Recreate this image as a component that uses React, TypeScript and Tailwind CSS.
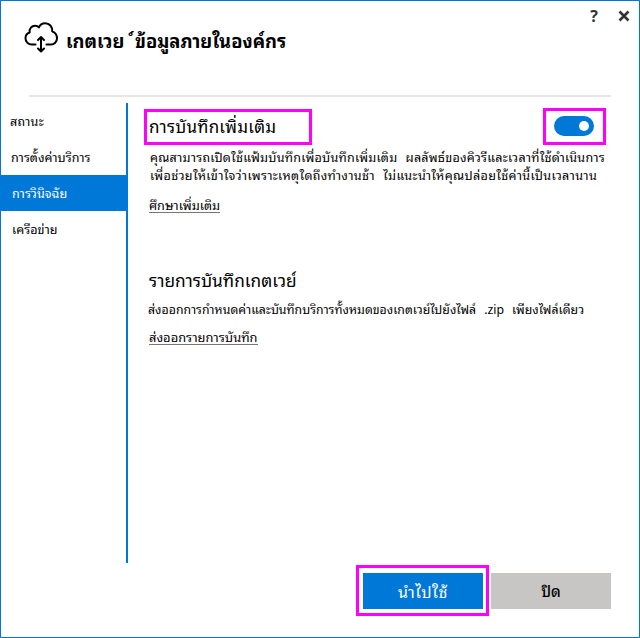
import React from "react";

const navItems = [
  { label: "สถานะ", style: "pl-[9px] tracking-[0.2px]", active: false },
  { label: "การตั้งค่าบริการ", style: "pl-[10px]", active: false },
  { label: "การวินิจฉัย", style: "pl-[11px]", active: true },
  { label: "เครือข่าย", style: "pl-[11px]", active: false },
];

function CloudIcon() {
  return (
    <svg width="36" height="34" viewBox="0 0 36 34" fill="none" stroke="#000" strokeWidth="2" strokeLinecap="round" strokeLinejoin="round" className="shrink-0">
      <path d="M11.5 23.5H8C4 23.5 1.5 20.5 1.5 17.2C1.5 14.4 3.2 12.2 5.7 11.5C5 7.5 7.7 4.8 11.1 4.8C12.7 4.8 14.1 5.4 14.9 6.5C16.1 3.3 18.5 2.2 21.1 2.2C25.5 2.2 28.5 5.6 28.2 10.4C30.9 11.5 33 13.9 33 17.2C33 20.8 30.3 23.5 26.9 23.5H22.5" />
      <path d="M17 16V30M14 19L17 16L20 19M14 27.5L17 30.5L20 27.5" />
    </svg>
  );
}

export default function App() {
  return (
    <div className="flex h-[638px] w-[640px] flex-col overflow-hidden border border-[#0078d7] bg-white font-['Noto_Sans_Thai_Looped','Loma','Noto_Sans','Open_Sans',sans-serif] text-black">
      <header className="flex h-[94px] shrink-0 justify-between pl-[23px]">
        <div className="flex items-start pt-[20px]">
          <CloudIcon />
          <h1 className="ml-[6px] mt-[4px] whitespace-pre text-[18.4px] font-bold leading-[30px] [word-spacing:0.5px]">เกตเวย  ์ข้อมูลภายในองค์กร</h1>
        </div>
        <div className="flex h-[30px] items-center gap-[20px] pr-[9px]">
          <button className="font-['Open_Sans',sans-serif] text-[16px] font-bold leading-none text-[#333]">?</button>
          <svg width="12" height="12" viewBox="0 0 12 12" stroke="#333" strokeWidth="2.6"><path d="M1.5 1.5L10.5 10.5M10.5 1.5L1.5 10.5" /></svg>
        </div>
      </header>
      <div className="ml-[28px] h-[2px] w-[582px] shrink-0 bg-[#e6e6e6]" />
      <div className="mt-[6px] flex h-[460px] shrink-0">
        <nav className="w-[125px] shrink-0">
          {navItems.map((item) => (
            <div key={item.label} className={`flex h-9 items-center whitespace-nowrap pb-[2px] text-[12.6px] ${item.style} ${item.active ? "bg-[#0078d7] text-white" : ""}`}>
              {item.label}
            </div>
          ))}
        </nav>
        <div className="w-[2px] shrink-0 bg-[#0078d7]" />
        <main className="flex min-w-0 flex-1 flex-col items-start whitespace-nowrap pl-[16px] pt-[5px]">
          <div className="flex h-[37px] w-[462px] justify-between">
            <div className="mt-px flex h-9 w-[168px] items-center border-[3px] border-[#ff00ff] pb-[2px] pl-[2px] text-[17px] tracking-[0.25px]">การบันทึกเพิ่มเติม</div>
            <div className="flex h-[37px] w-[63px] items-start justify-start border-[3px] border-[#ff00ff] pl-[8px] pt-[5px]">
              <div className="flex h-5 w-10 items-center justify-end rounded-full bg-[#0078d7] pr-[5px]">
                <div className="size-[10px] rounded-full bg-white" />
              </div>
            </div>
          </div>
          <p className="ml-[6px] mt-[2px] h-[36px] whitespace-pre text-[12.6px] leading-[18px] [word-spacing:0.6px]">
            <span className="block tracking-[0.22px]">คุณสามารถเปิดใช้แฟ้มบันทึกเพื่อบันทึกเพิ่มเติม  ผลลัพธ์ของคิวรีและเวลาที่ใช้ดำเนินการ</span>
            <span className="block tracking-[0.32px]">เพื่อช่วยให้เข้าใจว่าเพราะเหตุใดถึงทำงานช้า  ไม่แนะนำให้คุณปล่อยใช้ค่านี้เป็นเวลานาน</span>
          </p>
          <a className="ml-[5px] mt-[13px] h-[17px] border-b border-[#777] text-[12.7px] leading-[17px]">ศึกษาเพิ่มเติม</a>
          <h2 className="ml-[5px] mt-[52px] h-[28px] text-[17.3px] leading-[28px]">รายการบันทึกเกตเวย์</h2>
          <p className="ml-[4px] mt-[6px] h-[20px] whitespace-pre text-[12.3px] leading-[20px] tracking-[0.02px] [word-spacing:0.8px]">ส่งออกการกำหนดค่าและบันทึกบริการทั้งหมดของเกตเวย์ไปยังไฟล์  .zip  เพียงไฟล์เดียว</p>
          <a className="ml-[5px] mt-[9px] h-[17px] border-b border-[#777] text-[12.9px] leading-[17px]">ส่งออกรายการบันทึก</a>
        </main>
      </div>
      <footer className="ml-[355px] mt-[2px] flex items-center gap-[2px]">
        <div className="flex h-[51px] w-[133px] items-center border-[3px] border-[#ff00ff] pl-[4px]">
          <button className="h-9 w-[120px] bg-[#0078d7] text-[16px] tracking-[0.5px] text-white">นำไปใช้</button>
        </div>
        <button className="h-9 w-[120px] bg-[#c8c6c4] text-[15px] font-medium">ปิด</button>
      </footer>
    </div>
  );
}
